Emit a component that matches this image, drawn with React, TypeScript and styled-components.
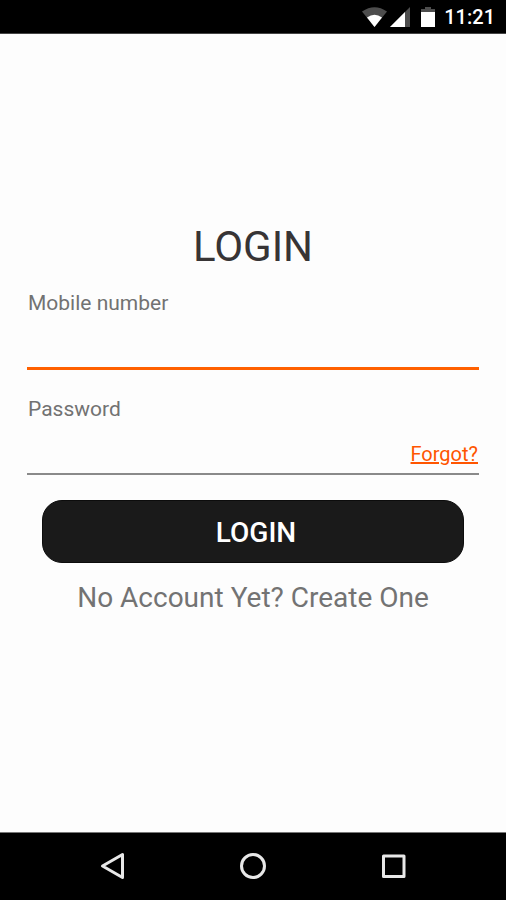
import React from "react";
import styled, { createGlobalStyle } from "styled-components";

const GlobalStyle = createGlobalStyle`
  *, *::before, *::after {
    box-sizing: border-box;
  }
  body {
    margin: 0;
    background: #fdfdfd;
    font-family: Roboto, "Liberation Sans", sans-serif;
  }
`;

const Screen = styled.div`
  display: flex;
  flex-direction: column;
  min-height: 100vh;
`;

const StatusBar = styled.header`
  display: flex;
  align-items: center;
  justify-content: flex-end;
  height: 34px;
  padding-right: 11px;
  background: #000;
  border-bottom: 1px solid #444;
  color: #fff;
`;

const StatusIcon = styled.svg<{ $gap: number }>`
  display: block;
  flex: none;
  margin-right: ${({ $gap }) => $gap}px;
`;

const Clock = styled.time`
  font-size: 20px;
  font-weight: 500;
  line-height: 24px;
`;

const Main = styled.main`
  display: flex;
  flex: 1;
  flex-direction: column;
  justify-content: center;
  padding: 0 27px 30px;
`;

const Title = styled.h1`
  margin: 0 0 19px;
  color: #373435;
  font-size: 42px;
  font-weight: 400;
  line-height: 50px;
  text-align: center;
`;

const Form = styled.form`
  display: flex;
  flex-direction: column;
`;

const Fields = styled.div`
  display: flex;
  flex-direction: column;
  gap: 27px;
  margin-bottom: 25px;
`;

const Field = styled.div`
  display: flex;
  flex-direction: column;
`;

const Label = styled.label`
  padding-left: 1px;
  color: #727272;
  font-size: 21px;
  line-height: 24px;
`;

const InputRow = styled.div<{ $active?: boolean }>`
  display: flex;
  align-items: center;
  padding-right: 1px;
  border-bottom: ${({ $active }) => ($active ? "3px solid #ff6000" : "2px solid #8a8a8a")};
`;

const Input = styled.input`
  flex: 1;
  min-width: 0;
  height: 52px;
  padding: 0;
  border: 0;
  outline: 0;
  background: transparent;
  color: #373435;
  font: inherit;
  font-size: 21px;
`;

const ForgotLink = styled.a`
  margin-top: 14px;
  color: #ff5500;
  font-size: 20px;
  line-height: 24px;
  text-decoration: underline;
`;

const LoginButton = styled.button`
  height: 63px;
  margin: 0 15px;
  padding: 2px 0 0 6px;
  border: 1px solid #0c0c0c;
  border-radius: 20px;
  background: #1a1a1a;
  color: #fff;
  font: inherit;
  font-size: 28px;
  font-weight: 500;
  cursor: pointer;
`;

const CreateLink = styled.a`
  align-self: center;
  margin-top: 19px;
  color: #737373;
  font-size: 28px;
  line-height: 32px;
  text-decoration: none;
`;

const NavBar = styled.nav`
  display: flex;
  align-items: center;
  justify-content: center;
  gap: 100px;
  height: 68px;
  padding-bottom: 2px;
  background: #000;
  border-top: 1px solid #777;
`;

const NavButton = styled.button`
  width: 40px;
  height: 40px;
  padding: 0;
  border: 0;
  background: transparent;
  cursor: pointer;

  svg {
    display: block;
    fill: none;
    stroke: #e8e8e8;
    stroke-width: 3;
    stroke-linejoin: round;
  }
`;

export default function App() {
  return (
    <>
      <GlobalStyle />
      <Screen>
        <StatusBar>
          <StatusIcon $gap={3} width="25" height="20" viewBox="0 0 25 20" aria-hidden="true">
            <path d="M0 4.5Q12.5-4 25 4.5L12.5 20Z" fill="#4d4d4d" />
            <path d="M5 10.5Q12.5 5 20 10.5L12.5 20Z" fill="#fff" />
          </StatusIcon>
          <StatusIcon $gap={11} width="20" height="20" viewBox="0 0 20 20" aria-hidden="true">
            <path d="M20 0V20H0Z" fill="#4d4d4d" />
            <path d="M15 5V20H0Z" fill="#fff" />
          </StatusIcon>
          <StatusIcon $gap={9} width="14" height="20" viewBox="0 0 14 20" aria-hidden="true">
            <path d="M4 0H10V2H14V5H0V2H4Z" fill="#4d4d4d" />
            <path d="M0 5H14V20H0Z" fill="#fff" />
          </StatusIcon>
          <Clock>11:21</Clock>
        </StatusBar>
        <Main>
          <Title>LOGIN</Title>
          <Form onSubmit={(event) => event.preventDefault()}>
            <Fields>
              <Field>
                <Label htmlFor="mobile">Mobile number</Label>
                <InputRow $active>
                  <Input id="mobile" type="tel" />
                </InputRow>
              </Field>
              <Field>
                <Label htmlFor="password">Password</Label>
                <InputRow>
                  <Input id="password" type="password" />
                  <ForgotLink href="#forgot">Forgot?</ForgotLink>
                </InputRow>
              </Field>
            </Fields>
            <LoginButton type="submit">LOGIN</LoginButton>
          </Form>
          <CreateLink href="#create">No Account Yet? Create One</CreateLink>
        </Main>
        <NavBar>
          <NavButton type="button" aria-label="Back">
            <svg width="40" height="40" viewBox="0 0 40 40">
              <path d="M29.5 8.5V31.5L9.5 20Z" />
            </svg>
          </NavButton>
          <NavButton type="button" aria-label="Home">
            <svg width="40" height="40" viewBox="0 0 40 40">
              <circle cx="20" cy="20" r="11.5" />
            </svg>
          </NavButton>
          <NavButton type="button" aria-label="Recent apps">
            <svg width="40" height="40" viewBox="0 0 40 40">
              <rect x="10.5" y="10" width="20.5" height="20.5" />
            </svg>
          </NavButton>
        </NavBar>
      </Screen>
    </>
  );
}
